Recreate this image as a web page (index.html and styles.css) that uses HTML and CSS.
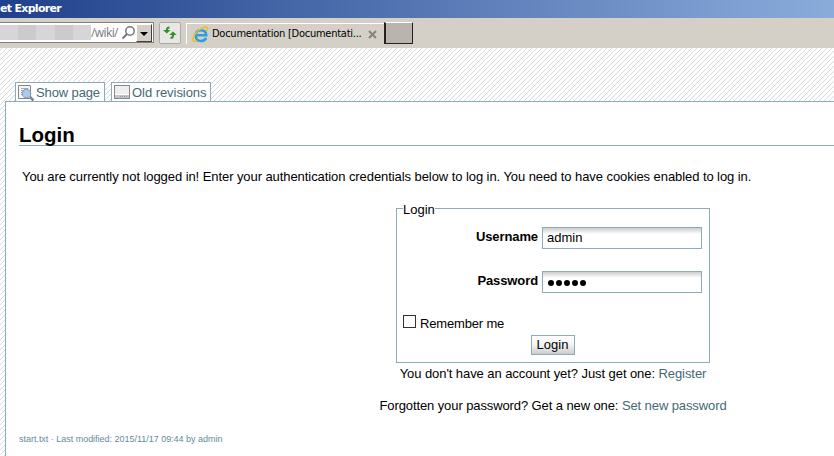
FILE: index.html
```html
<!DOCTYPE html>
<html lang="en">
<head>
<meta charset="utf-8">
<title>Documentation</title>
<link rel="stylesheet" href="styles.css">
</head>
<body>
<header class="titlebar"><span>et Explorer</span></header>
<div class="toolbar">
  <div class="address">
    <div class="redacted"><i></i><i></i><i></i><i></i><i></i></div>
    <span class="path">/wiki/</span>
    <svg class="search" width="15" height="16" viewBox="0 0 15 16"><circle cx="9" cy="6" r="4.2" fill="none" stroke="#777" stroke-width="1.500"/><path d="M6 9L1.500 13.500" stroke="#777" stroke-width="2"/></svg>
    <button class="drop"><svg width="8" height="4" viewBox="0 0 8 4"><path d="M0 0h8L4 4z"/></svg></button>
  </div>
  <button class="refresh"><svg width="16" height="16" viewBox="0 0 16 16"><path d="M5 7V4.500Q5 2.500 7.500 2.500M11 7.500v3Q11 13 8.500 13" fill="none" stroke="#2c922c" stroke-width="2"/><path d="M1 5h7.500L4.800 8.500zM7.300 10L11 6.500L14.700 10z" fill="#2c922c"/></svg></button>
  <div class="tab">
    <svg width="17" height="17" viewBox="0 0 17 17"><path d="M14.300 12Q12.500 15 9 15Q3.700 15 3.700 9.500Q3.700 4.200 9 4.200Q14 4.200 14.300 9.300H5" fill="none" stroke="#2c9edb" stroke-width="2.500"/><path d="M5 14.500C-.5 18 0 11 4 7C8 2.500 14-.5 15.300 2Q15.800 3 14.800 5" fill="none" stroke="#efbc29" stroke-width="1.600"/></svg>
    <span class="tabtitle">Documentation [Documentati...</span>
    <svg class="close" width="9" height="9" viewBox="0 0 9 9"><path d="M1 1l7 7M8 1L1 8" stroke="#87847e" stroke-width="2"/></svg>
  </div>
  <div class="newtab"></div>
</div>
<div class="canvas">
  <nav class="actions">
    <a class="action show"><svg width="17" height="18" viewBox="0 0 17 18"><path d="M.5 1.500h12v13H.5z" fill="#f5f5f5" stroke="#858585"/><path d="M3 4.500h7M3 6.500h3M3 8.500h2M3 10.500h2" stroke="#aaa"/><circle cx="8.500" cy="9.500" r="4.300" fill="#a9cbed" stroke="#7b97b3"/><path d="M12 13l3.500 3.500" stroke="#858585" stroke-width="2.500"/></svg><span>Show page</span></a>
    <a class="action old"><svg width="17" height="16" viewBox="0 0 17 16"><rect x=".5" y="1.500" width="15" height="13" fill="#eee" stroke="#888"/><path d="M1 11h14v3H1z" fill="#c4c4c4"/><path d="M1 10.500h14" stroke="#fff"/><path d="M6 12.500h8" stroke="#999" stroke-dasharray="1 1"/></svg><span>Old revisions</span></a>
  </nav>
  <main class="page">
    <h1><span>Login</span></h1>
    <p class="intro"><span>You are currently not logged in! Enter your authentication credentials below to log in. You need to have cookies enabled to log in.</span></p>
    <form class="form">
      <fieldset>
        <legend>Login</legend>
        <label class="field"><b>Username</b><span class="input">admin</span></label>
        <label class="field pass"><b>Password</b><span class="input"><svg width="40" height="8" viewBox="0 0 40 8"><circle cx="4" cy="4" r="3"/><circle cx="12" cy="4" r="3"/><circle cx="20" cy="4" r="3"/><circle cx="28" cy="4" r="3"/><circle cx="36" cy="4" r="3"/></svg></span></label>
        <label class="remember"><i></i><span>Remember me</span></label>
        <button type="button" class="submit">Login</button>
      </fieldset>
      <p class="register"><span>You don't have an account yet? Just get one: <a>Register</a></span></p>
      <p class="forgot"><span>Forgotten your password? Get a new one: <a>Set new password</a></span></p>
    </form>
    <footer><span>start.txt · Last modified: 2015/11/17 09:44 by admin</span></footer>
  </main>
</div>
</body>
</html>
```
FILE: styles.css
```css
* { box-sizing: border-box; }
body { margin: 0; width: 834px; height: 456px; overflow: hidden; background: #fff; color: #000; font: 13px/16px "Liberation Sans", Arial, sans-serif; }
span, b { white-space: nowrap; }
svg { display: block; flex: none; }
p { margin: 0; }
.titlebar { height: 18px; background: linear-gradient(90deg, #20408b, #8aacdb); color: #fff; font: bold 11px/18px "DejaVu Sans", sans-serif; letter-spacing: -.7px; }
.toolbar { height: 30px; display: flex; background: #d4d0c8; padding-top: 4px; }
.address { width: 154px; height: 21px; border: 1px solid #808080; border-width: 1px 1px 1px 0; background: #fff; display: flex; align-items: center; }
.redacted { width: 91px; height: 15px; display: flex; }
.redacted i { flex: 1; background: #d6d6d8; }
.redacted i:nth-child(even) { background: #cbcbce; }
.path { width: 30px; color: #777; font: 12px/16px "Open Sans", sans-serif; letter-spacing: -.6px; }
.search { width: 15px; }
.drop { margin: 0 1px 0 auto; width: 16px; height: 18px; padding: 2px 0 0 3px; background: #d4d0c8; border: 1px solid; border-color: #fff #404040 #404040 #fff; }
.refresh { width: 22px; height: 22px; margin-left: 5px; padding: 2px; border: 1px solid #a6a9b4; border-radius: 2px; background: #e9e7e4; }
.tab { width: 198px; height: 21px; margin: 1px 0 0 5px; border: 1px solid #fff; border-width: 1px 0 0 1px; display: flex; align-items: center; padding-left: 5px; }
.tabtitle { width: 156px; margin-left: 3px; font: 11px/16px "DejaVu Sans Condensed", "DejaVu Sans", sans-serif; letter-spacing: -.25px; }
.newtab { width: 29px; height: 22px; background: #b9b5ae; border: 1px solid #222; border-width: 1px 1px 1px 2px; border-top-color: #fff; }
.canvas { height: 408px; padding: 34px 0 0 5px; background: #fff url("data:image/svg+xml,%3Csvg xmlns='http://www.w3.org/2000/svg' width='5' height='5' shape-rendering='crispEdges'%3E%3Cpath d='M0 4h1v1H0zM1 3h1v1H1zM2 2h1v1H2zM3 1h1v1H3zM4 0h1v1H4z' fill='%23d9d9d9'/%3E%3C/svg%3E") 2px 0; }
.actions { height: 19px; display: flex; padding-left: 10px; gap: 6px; }
.action { height: 19px; border: 1px solid #8cacbb; border-bottom: 0; background: #fff; display: flex; color: #436976; line-height: 19px; }
.show { width: 90px; padding-left: 2px; letter-spacing: -.12px; }
.old { width: 100px; padding-left: 2px; letter-spacing: -.05px; }
.action svg { margin-top: 1px; }
.action span { margin-left: 1px; }
.page { height: 355px; border: 1px solid #8cacbb; border-width: 1px 0 0 1px; background: #fff; padding: 20px 0 0 13px; }
h1 { margin: 0; height: 24px; border-bottom: 1px solid #8cacbb; font-size: 20.5px; line-height: 25px; }
.intro { padding: 23px 0 0 3px; letter-spacing: -.073px; }
.form { width: 348px; margin: 15px 0 0 360px; }
fieldset { width: 314px; height: 163px; margin: 0 0 0 17px; padding: 11px 7px 0 6px; border: 1px solid #8cacbb; }
legend { height: 16px; padding: 0; line-height: 20px; }
.field { height: 22px; display: flex; justify-content: flex-end; gap: 4px; line-height: 20px; }
.field b { letter-spacing: -.1px; }
.input { width: 160px; height: 22px; border: 1px solid #8cacbb; padding-left: 4px; background: linear-gradient(#ccc, #fff 6px); }
.pass { margin-top: 22px; }
.pass svg { margin-top: 7px; }
.remember { height: 16px; margin-top: 23px; display: flex; gap: 4px; letter-spacing: -.17px; }
.remember i { width: 13px; height: 13px; margin-top: -1px; border: 1px solid #333; background: #fff; }
.submit { display: block; width: 44px; height: 20px; margin: 3px auto 0; padding: 0; border: 1px solid #8cacbb; background: linear-gradient(#fff, #f3f3f3 50%, #ccc); font: inherit; }
.register, .forgot { text-align: center; }
.register { margin-top: 3px; letter-spacing: -.075px; }
.forgot { margin-top: 16px; letter-spacing: -.1px; }
a { color: #436976; }
footer { margin-top: 19px; color: #638c9c; font-size: 9px; line-height: 12px; letter-spacing: -.02px; }
```
